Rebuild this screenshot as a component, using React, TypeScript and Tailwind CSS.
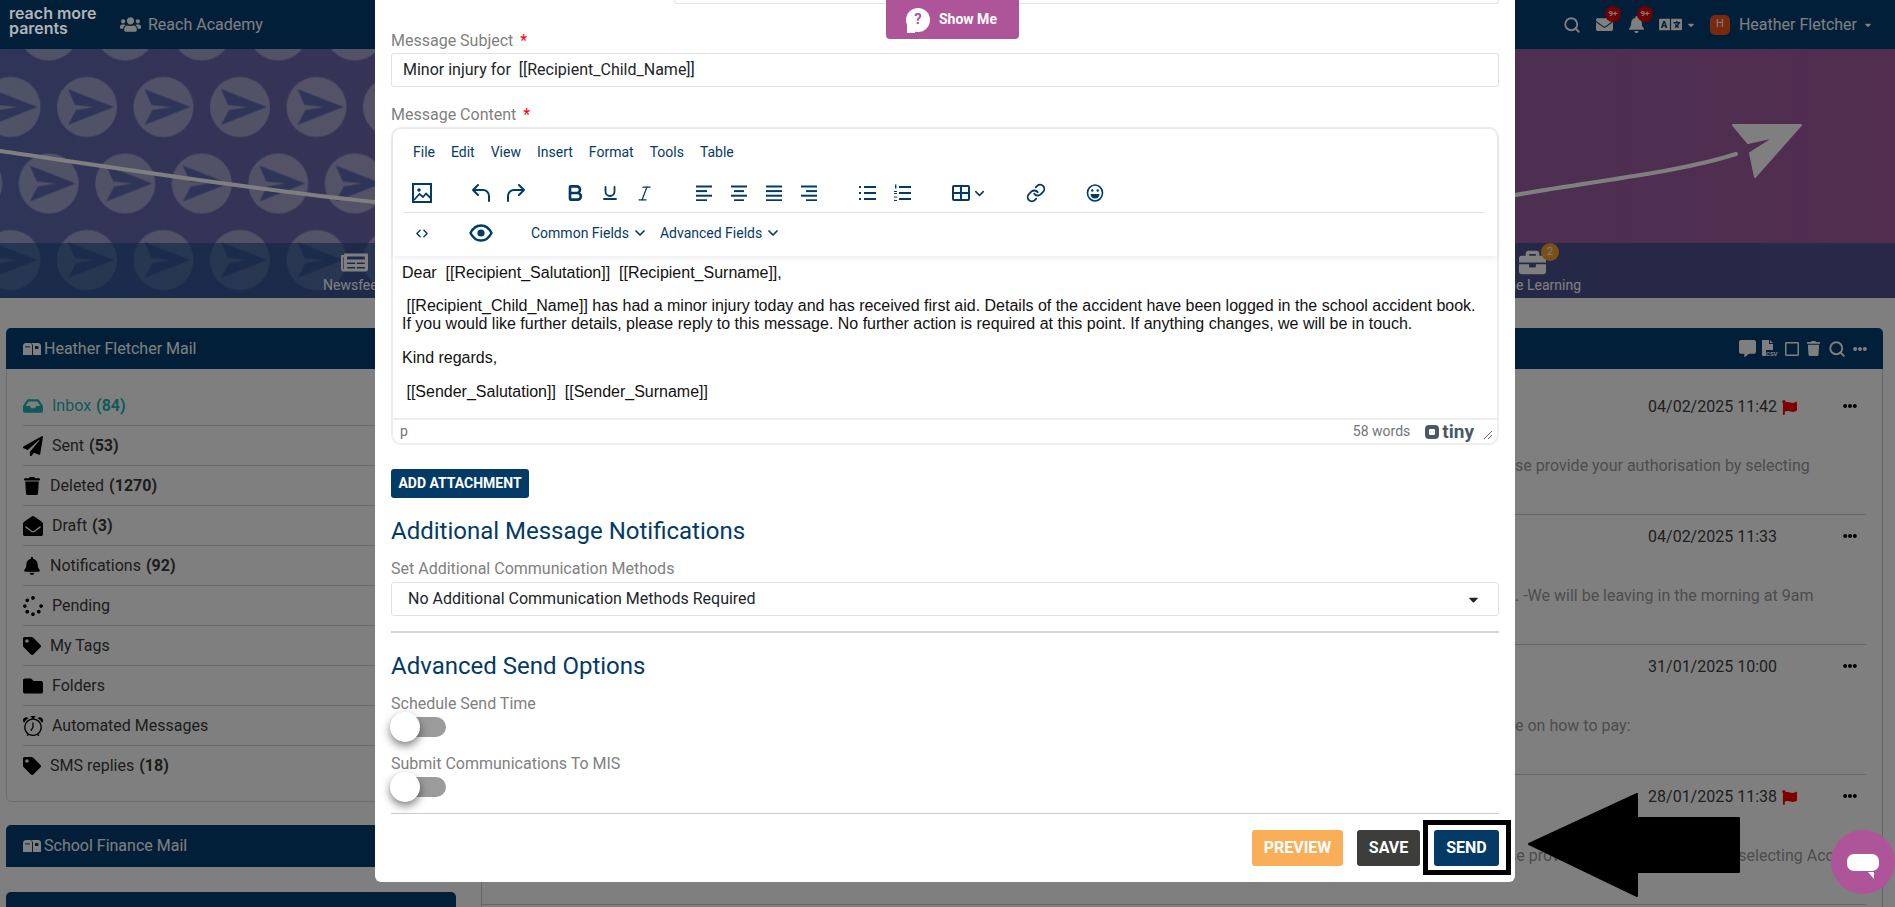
import React from "react";
import {
  FaBell, FaBriefcase, FaCaretDown, FaCommentAlt, FaEllipsisH, FaEnvelope, FaEnvelopeOpen, FaFlag, FaFolder,
  FaInbox, FaLanguage, FaNewspaper, FaPaperPlane, FaRegSquare, FaSpinner, FaTag, FaTrash, FaUsers,
} from "react-icons/fa";
import { BsAlarm } from "react-icons/bs";
import { Bold, Italic, Underline, ChevronDown, ChevronLeft, ChevronRight, Link, Search } from "lucide-react";

const Lines = ({ rows }: { rows: [number, number][] }) => (
  <svg width="18" height="16" viewBox="0 0 18 16" fill="#043a66">
    {rows.map(([x, w], i) => (
      <rect key={i} x={x} y={i * 4.6 + 0.5} width={w} height="2" />
    ))}
  </svg>
);

const ImageIcon = () => (
  <svg width="20" height="20" viewBox="0 0 20 20" fill="none" stroke="#043a66" strokeWidth="2">
    <rect x="1" y="1" width="18" height="18" />
    <circle cx="7" cy="7" r="1.8" fill="#043a66" stroke="none" />
    <path d="M2 17l5.5-6 3.5 3 3-3.5 4.5 4.5" strokeWidth="1.8" />
  </svg>
);

const Undo = ({ flip }: { flip?: boolean }) => (
  <svg width="22" height="22" viewBox="0 0 22 22" fill="none" stroke="#043a66" strokeWidth="2" strokeLinecap="round" strokeLinejoin="round" className={flip ? "-scale-x-100" : ""}>
    <path d="M8 3L3 8l5 5M3 8h10a6 6 0 0 1 6 6v5" />
  </svg>
);

const BulletList = () => (
  <svg width="18" height="18" viewBox="0 0 18 18" fill="#043a66">
    <rect x="5" y="2" width="12" height="2" /><rect x="5" y="8" width="12" height="2" /><rect x="5" y="14" width="12" height="2" />
    <rect x="0" y="2" width="2" height="2" /><rect x="0" y="8" width="2" height="2" /><rect x="0" y="14" width="2" height="2" />
  </svg>
);

const NumList = () => (
  <svg width="18" height="18" viewBox="0 0 18 18" fill="#043a66">
    <rect x="5" y="2" width="12" height="2" /><rect x="5" y="8" width="12" height="2" /><rect x="5" y="14" width="12" height="2" />
    <rect x="1" y="0.5" width="1.4" height="4" /><rect x="0" y="7" width="3" height="1" /><rect x="0" y="9" width="3" height="1" /><rect x="0" y="12.5" width="3" height="1" /><rect x="0" y="16" width="3" height="1" />
  </svg>
);

const TableIcon = () => (
  <svg width="18" height="18" viewBox="0 0 18 18" fill="none" stroke="#043a66" strokeWidth="2">
    <rect x="1" y="2" width="16" height="14" rx="1" />
    <path d="M1 9h16M9 2v14" />
  </svg>
);

const Smile = () => (
  <svg width="18" height="20" viewBox="0 0 18 20" fill="none" stroke="#043a66" strokeWidth="1.6">
    <ellipse cx="9" cy="10" rx="7.5" ry="8" />
    <circle cx="6.3" cy="7.5" r="1.2" fill="#043a66" stroke="none" />
    <circle cx="11.7" cy="7.5" r="1.2" fill="#043a66" stroke="none" />
    <path d="M4.5 11h9c0 3-2 4.5-4.5 4.5S4.5 14 4.5 11z" fill="#043a66" stroke="none" />
  </svg>
);

const EyeIcon = () => (
  <svg width="24" height="18" viewBox="0 0 24 18" fill="none" stroke="#043a66" strokeWidth="2.4">
    <path d="M1.5 9C4 4 8 1.5 12 1.5S20 4 22.5 9C20 14 16 16.5 12 16.5S4 14 1.5 9z" />
    <circle cx="12" cy="9" r="3.6" fill="#043a66" stroke="none" />
  </svg>
);

const CsvIcon = () => (
  <svg width="17" height="17" viewBox="0 0 17 17" className="ml-[5px] mr-[6px]">
    <path d="M1 0h7v4h4v6H1z" fill="#ffffff" />
    <path d="M9 0l3 3H9z" fill="#ffffff" />
    <path d="M1 10h4v6H2a1 1 0 0 1-1-1z" fill="#ffffff" />
    <text x="5" y="15.5" fontSize="6" fontWeight="700" fill="#ffffff" fontFamily="Roboto, sans-serif">CSV</text>
  </svg>
);

const ToolBtn = ({ children }: { children: React.ReactNode }) => (
  <div className="flex h-[34px] w-[35px] items-center justify-center">{children}</div>
);

const MailIcon = () => (
  <svg width="18" height="12" viewBox="0 0 18 12" fill="#ffffff">
    <path d="M3 0h3.6c1.6 0 2.4 1 2.4 3v9H0V3c0-2 1.4-3 3-3z" />
    <path d="M7 0h8c1.7 0 3 1.3 3 3v9H10V3c0-1.3-1-3-3-3z" />
    <rect x="2" y="3.4" width="5" height="1" fill="#023f70" />
    <rect x="12" y="3" width="3.4" height="3" fill="#023f70" />
  </svg>
);

const Hero = () => (
  <svg className="absolute inset-0 h-full w-full" xmlns="http://www.w3.org/2000/svg">
    <defs>
      <pattern id="planes" x="10.5" y="-18.5" width="76.5" height="153" patternUnits="userSpaceOnUse">
        <g>
          <circle cx="0" cy="76.5" r="30" fill="#ffffff" fillOpacity="0.4" />
          <circle cx="76.5" cy="76.5" r="30" fill="#ffffff" fillOpacity="0.4" />
          <path transform="translate(0 76.5)" d="M27 0L-19-18-12-2 7 0-11 3-19 18z" fill="#5e6ab0" />
          <path transform="translate(76.5 76.5)" d="M27 0L-19-18-12-2 7 0-11 3-19 18z" fill="#5e6ab0" />
          <circle cx="38.25" cy="0" r="30" fill="#ffffff" fillOpacity="0.4" />
          <circle cx="38.25" cy="153" r="30" fill="#ffffff" fillOpacity="0.4" />
          <path transform="translate(38.25 0)" d="M27 0L-19-18-12-2 7 0-11 3-19 18z" fill="#5e6ab0" />
          <path transform="translate(38.25 153)" d="M27 0L-19-18-12-2 7 0-11 3-19 18z" fill="#5e6ab0" />
        </g>
      </pattern>
    </defs>
    <rect x="0" y="0" width="700" height="248" fill="url(#planes)" />
    <path d="M0 102C130 121 260 141 375 153C700 191 1200 211 1515 146C1600 131 1680 123 1736 105" fill="none" stroke="#ffffff" strokeWidth="4" strokeLinecap="round" />
    <path d="M1733 76L1801 76 1755 128 1750 104 1775 88 1748 94z" fill="#ffffff" stroke="#ffffff" strokeWidth="2" strokeLinejoin="round" />
  </svg>
);

const sideItems = [
  { icon: <FaInbox size={20} />, label: "Inbox", count: "(84)", gap: "gap-[9px]", active: true },
  { icon: <FaPaperPlane size={20} />, label: "Sent", count: "(53)", gap: "gap-[9px]" },
  { icon: <FaTrash size={18} />, label: "Deleted", count: "(1270)", gap: "gap-[9px]" },
  { icon: <FaEnvelopeOpen size={20} />, label: "Draft", count: "(3)", gap: "gap-[9px]" },
  { icon: <FaBell size={18} />, label: "Notifications", count: "(92)", gap: "gap-[9px]" },
  { icon: <FaSpinner size={20} />, label: "Pending", gap: "gap-[9px]" },
  { icon: <FaTag size={18} />, label: "My Tags", gap: "gap-[9px]" },
  { icon: <FaFolder size={20} />, label: "Folders", gap: "gap-[9px]" },
  { icon: <BsAlarm size={20} />, label: "Automated Messages", gap: "gap-[9px]" },
  { icon: <FaTag size={18} />, label: "SMS replies", count: "(18)", gap: "gap-[9px]" },
];

const mailRows = [
  { date: "04/02/2025 11:42", flag: true, text: "se provide your authorisation by selecting", ml: "ml-[1033px]" },
  { date: "04/02/2025 11:33", flag: false, text: ". -We will be leaving in the morning at 9am", ml: "ml-[1033px]" },
  { date: "31/01/2025 10:00", flag: false, text: "e on how to pay:", ml: "ml-[1033px]" },
  { date: "28/01/2025 11:38", flag: true, text: "se provide your authorisation by selecting Accept", ml: "ml-[1026px]" },
];

const Toggle = () => (
  <div className="relative mt-px h-5 w-[55px] rounded-full bg-[#9b9b9b]">
    <div className="absolute -left-px -top-[5px] h-[30px] w-[30px] rounded-full bg-white shadow-[0_4px_8px_rgba(0,0,0,0.5)]" />
  </div>
);

const Label = ({ children, req, className = "" }: { children: React.ReactNode; req?: boolean; className?: string }) => (
  <div className={`h-6 text-[16px] leading-6 text-[#808080] ${className}`}>
    {children}
    {req && <span className="ml-[7px] text-[#ff0000]">*</span>}
  </div>
);

export default function App() {
  return (
    <div className="relative h-[907px] w-[1895px] overflow-hidden bg-white font-['Roboto',sans-serif] text-[16px] text-[#333333]">
      {/* Page under the backdrop */}
      <header className="flex h-[49px] items-center bg-[#023f70] text-white">
        <div className="relative z-10 mb-[7px] ml-[9px] w-[88px] whitespace-nowrap font-['Inter',sans-serif] text-[16px] font-semibold leading-[15px] text-[#b0b5b9]">
          <div>reach more</div>
          <div>parents</div>
        </div>
        <FaUsers size={21} className="ml-[23px]" />
        <span className="ml-[7px]">Reach Academy</span>
        <div className="ml-auto flex items-center">
          <Search size={18} strokeWidth={2.5} />
          <div className="relative ml-[15px]">
            <FaEnvelope size={17} />
            <span className="absolute -right-[8px] -top-[10px] flex h-4 w-4 items-center justify-center rounded-full bg-[#e00000] text-[8px] font-bold">9+</span>
          </div>
          <div className="relative ml-[15px]">
            <FaBell size={17} />
            <span className="absolute -right-[8px] -top-[10px] flex h-4 w-4 items-center justify-center rounded-full bg-[#e00000] text-[8px] font-bold">9+</span>
          </div>
          <FaLanguage size={23} className="ml-[14px]" />
          <FaCaretDown size={10} className="ml-[4px]" />
          <div className="ml-[14px] flex h-5 w-5 items-center justify-center rounded-[5px] bg-[#f0541e] text-[11px]">H</div>
          <span className="ml-[9px]">Heather Fletcher</span>
          <FaCaretDown size={10} className="ml-[6px] mr-[22px]" />
        </div>
      </header>

      <section className="relative flex h-[249px] flex-col justify-end bg-gradient-to-r from-[#5e6ab0] to-[#a45aa0]">
        <Hero />
        <nav className="relative flex h-[55px] items-start justify-between bg-[#1a4a85]/60 pl-[323px] pr-[314px] pt-[6px] text-[14px] text-white">
          <div className="flex flex-col items-center">
            <FaNewspaper size={27} />
            <span className="leading-[18px]">Newsfeed</span>
          </div>
          <div className="flex flex-col items-center">
            <div className="relative">
              <FaBriefcase size={27} />
              <span className="absolute -right-[13px] -top-[6px] flex h-[18px] w-[18px] items-center justify-center rounded-full bg-[#f0a030] text-[11px]">2</span>
            </div>
            <span className="leading-[18px]">Online Learning</span>
          </div>
        </nav>
      </section>

      <main className="flex gap-[25px] pl-[6px] pr-[12px] pt-[30px]">
        <aside className="flex w-[450px] shrink-0 flex-col">
          <div className="rounded-[5px] border border-[#dddddd]">
            <div className="-m-px flex h-[41px] items-center gap-[3px] rounded-t-[5px] bg-[#023f70] pl-[17px] text-white">
              <MailIcon /> Heather Fletcher Mail
            </div>
            <ul className="mx-4 pb-[15px] pt-[18px]">
              {sideItems.map((it) => (
                <li key={it.label} className={`flex h-10 items-center border-b border-[#d4d4d4] last:border-b-0 ${it.gap} ${it.active ? "text-[#1fb5b2]" : "text-[#3a3a3a]"}`}>
                  <span className={it.active ? "text-[#1fb5b2]" : "text-black"}>{it.icon}</span>
                  <span>
                    {it.label}
                    {it.count && <b className="ml-[5px] font-bold">{it.count}</b>}
                  </span>
                </li>
              ))}
            </ul>
          </div>
          <div className="mt-[23px] flex h-[42px] items-center gap-[3px] rounded-t-[5px] bg-[#023f70] pl-[17px] text-white">
            <MailIcon /> School Finance Mail
          </div>
          <div className="mt-[25px] h-[60px] rounded-t-[5px] bg-[#023f70]" />
        </aside>

        <section className="h-[700px] min-w-0 flex-1 rounded-[5px] border border-[#cccccc]">
          <div className="-m-px flex h-[41px] items-center justify-end rounded-t-[5px] bg-[#023f70] pr-[16px] text-white">
            <FaCommentAlt size={17} />
            <CsvIcon />
            <FaRegSquare size={16} />
            <FaTrash size={15} className="ml-[6px]" />
            <Search size={18} strokeWidth={2.5} className="ml-[7px]" />
            <FaEllipsisH size={14} className="ml-[7px]" />
          </div>
          <div className="pt-[17px]">
            {mailRows.map((r) => (
              <div key={r.date} className="mr-[16px] h-[130px] border-b border-[#cccccc]">
                <div className="flex h-[33px] items-end justify-end leading-6 text-[#3e3e3e]">
                  <span className="mb-[-1px]">{r.date}</span>
                  <span className="mb-[3px] ml-[5px] w-[14px] text-[#ff0000]">{r.flag && <FaFlag size={15} />}</span>
                  <FaEllipsisH size={14} className="mb-[5px] ml-[47px] mr-[9px] text-black" />
                </div>
                <p className={`mt-[36px] whitespace-nowrap leading-6 text-[#9a9a9a] ${r.ml}`}>{r.text}</p>
              </div>
            ))}
          </div>
        </section>
      </main>

      {/* Backdrop */}
      <div className="absolute inset-0 bg-black/50" />

      {/* Modal */}
      <div className="absolute left-[375px] top-0 z-20 flex h-[882px] w-[1140px] flex-col rounded-b-[6px] bg-white px-4">
        <div className="ml-[283px] h-1 rounded-b-[3px] border border-t-0 border-[#e4e4e7]" />
        <Label req className="mt-[25px]">Message Subject</Label>
        <div className="flex h-[34px] items-center rounded-[3px] border border-[#e2e2e6] pl-[11px] text-[#212529]">Minor injury for&nbsp; [[Recipient_Child_Name]]</div>
        <Label req className="mt-4">Message Content</Label>

        <div className="flex h-[318px] flex-col rounded-[10px] border-2 border-[#eeeeee]">
          <div className="relative h-[127px] rounded-t-[10px] bg-white pl-[11px] pr-3 shadow-[0_2px_6px_rgba(0,0,0,0.08)]">
            <div className="mt-[11px] flex h-6 items-center gap-[16px] pl-[9px] text-[14px] text-[#043a66]">
              {["File", "Edit", "View", "Insert", "Format", "Tools", "Table"].map((m) => (
                <span key={m}>{m}</span>
              ))}
            </div>
            <div className="mt-3 flex items-center gap-6 border-b border-[#e3e3e3] pb-[2px]">
              <ToolBtn><ImageIcon /></ToolBtn>
              <div className="flex"><ToolBtn><Undo /></ToolBtn><ToolBtn><Undo flip /></ToolBtn></div>
              <div className="flex">
                <ToolBtn><Bold size={20} strokeWidth={3.2} color="#043a66" /></ToolBtn>
                <ToolBtn><Underline size={18} strokeWidth={2.4} color="#043a66" /></ToolBtn>
                <ToolBtn><Italic size={19} strokeWidth={1.6} color="#043a66" /></ToolBtn>
              </div>
              <div className="flex">
                <ToolBtn><Lines rows={[[1, 16], [1, 11], [1, 16], [1, 11]]} /></ToolBtn>
                <ToolBtn><Lines rows={[[1, 16], [4, 10], [1, 16], [4, 10]]} /></ToolBtn>
                <ToolBtn><Lines rows={[[1, 16], [1, 16], [1, 16], [1, 16]]} /></ToolBtn>
                <ToolBtn><Lines rows={[[1, 16], [6, 11], [1, 16], [6, 11]]} /></ToolBtn>
              </div>
              <div className="flex"><ToolBtn><BulletList /></ToolBtn><ToolBtn><NumList /></ToolBtn></div>
              <div className="flex h-[34px] w-[50px] items-center pl-[8px]">
                <TableIcon />
                <ChevronDown size={15} strokeWidth={2.4} color="#043a66" className="ml-[2px]" />
              </div>
              <ToolBtn><Link size={20} strokeWidth={2.2} color="#043a66" /></ToolBtn>
              <ToolBtn><Smile /></ToolBtn>
            </div>
            <div className="flex h-[38px] items-center pt-[2px] text-[14px] text-[#043a66]">
              <div className="ml-[8px] flex w-[20px] items-center justify-center">
                <ChevronLeft size={15} strokeWidth={2.6} color="#043a66" className="-mr-[3px]" />
                <ChevronRight size={15} strokeWidth={2.6} color="#043a66" className="-ml-[3px]" />
              </div>
              <div className="ml-[37px]"><EyeIcon /></div>
              <span className="ml-[38px]">Common Fields</span>
              <ChevronDown size={16} strokeWidth={2.6} color="#043a66" className="ml-[3px]" />
              <span className="ml-[12px]">Advanced Fields</span>
              <ChevronDown size={16} strokeWidth={2.6} color="#043a66" className="ml-[3px]" />
            </div>
          </div>
          <div className="min-h-0 flex-1 pl-[9px] pr-[20px] pt-[8px] font-['Liberation_Sans',Arial,sans-serif] text-[16px] leading-[18px] text-[#111111]">
            <p className="mb-[15px]">Dear&nbsp; [[Recipient_Salutation]]&nbsp; [[Recipient_Surname]],</p>
            <p className="mb-4">&nbsp;[[Recipient_Child_Name]] has had a minor injury today and has received first aid. Details of the accident have been logged in the school accident book. If you would like further details, please reply to this message. No further action is required at this point. If anything changes, we will be in touch.</p>
            <p className="mb-4">Kind regards,</p>
            <p>&nbsp;[[Sender_Salutation]]&nbsp; [[Sender_Surname]]</p>
          </div>
          <div className="flex h-[25px] items-center border-t-2 border-[#eeeeee] pl-[7px] text-[14px] text-[#6f7479]">
            <span>p</span>
            <span className="ml-auto mr-[-1px]">58 words</span>
            <svg width="16" height="16" viewBox="0 0 16 16" className="ml-[15px]">
              <rect x="1" y="1" width="14" height="14" rx="4" fill="#4a5868" />
              <rect x="5" y="5" width="6" height="6" rx="1" fill="#ffffff" />
            </svg>
            <span className="ml-[2px] text-[19px] font-bold leading-none text-[#4a5868]">tiny</span>
            <svg width="10" height="10" viewBox="0 0 10 10" className="ml-[9px] mr-[4px] mt-[6px]" stroke="#666666" fill="none">
              <path d="M1 9l8-8M5 9l4-4" />
            </svg>
          </div>
        </div>

        <button className="mt-6 h-[29px] w-[138px] rounded-[3px] bg-[#043a66] text-[14px] font-bold text-white">ADD ATTACHMENT</button>

        <h3 className="mt-[17px] text-[24px] leading-8 text-[#043a66]">Additional Message Notifications</h3>
        <Label className="mt-[10px]">Set Additional Communication Methods</Label>
        <div className="mt-px flex h-[34px] items-center rounded-[3px] border border-[#e2e2e6] pl-[16px] pr-[17px] text-[#212529]">
          No Additional Communication Methods Required
          <FaCaretDown size={15} className="ml-auto text-[#222222]" />
        </div>
        <hr className="mt-[15px] border-t-2 border-[#d4d4d4]" />
        <h3 className="mt-[17px] text-[24px] leading-8 text-[#043a66]">Advanced Send Options</h3>
        <Label className="mt-[10px]">Schedule Send Time</Label>
        <Toggle />
        <Label className="mt-[15px]">Submit Communications To MIS</Label>
        <Toggle />
        <hr className="mt-4 border-[#cccccc]" />
        <div className="mt-4 flex justify-end gap-[14px] font-bold text-white">
          <button className="h-9 w-[91px] rounded-[3px] bg-[#f9ae57]">PREVIEW</button>
          <button className="h-9 w-[63px] rounded-[3px] bg-[#3d3d3b]">SAVE</button>
          <div className="relative">
            <button className="h-9 w-[65px] rounded-[3px] bg-[#043a66]">SEND</button>
            <div className="absolute -bottom-[9px] -left-[11px] -right-[12px] -top-[10px] border-[5px] border-black" />
          </div>
        </div>

        {/* Show Me tab */}
        <div className="absolute left-[511px] top-0 flex h-[39px] w-[133px] items-center rounded-b-[4px] bg-[#ae5599] pl-[20px] text-[14px] font-bold text-white">
          <div className="relative flex h-6 w-6 items-center justify-center rounded-full bg-white text-[15px] text-[#ae5599]">
            ?
            <span className="absolute -bottom-[1px] left-[1px] h-2 w-2 bg-white" />
          </div>
          <span className="ml-[9px]">Show Me</span>
        </div>
      </div>

      {/* Annotation arrow */}
      <svg className="absolute left-[1525px] top-[790px] z-30" width="220" height="112" viewBox="0 0 220 112">
        <path d="M4 54L112 4V28H214V82H112V106z" fill="#000000" stroke="#000000" strokeWidth="2" strokeLinejoin="round" />
      </svg>

      {/* Chat launcher */}
      <div className="absolute left-[1831px] top-[830px] z-30 flex h-16 w-16 items-center justify-center rounded-full bg-[#ae5599]">
        <div className="relative h-[17px] w-8 rounded-[7px] bg-white">
          <span className="absolute -bottom-[8px] right-[5px] h-0 w-0 border-l-[6px] border-t-[7px] border-l-transparent border-t-white" />
        </div>
      </div>
    </div>
  );
}
